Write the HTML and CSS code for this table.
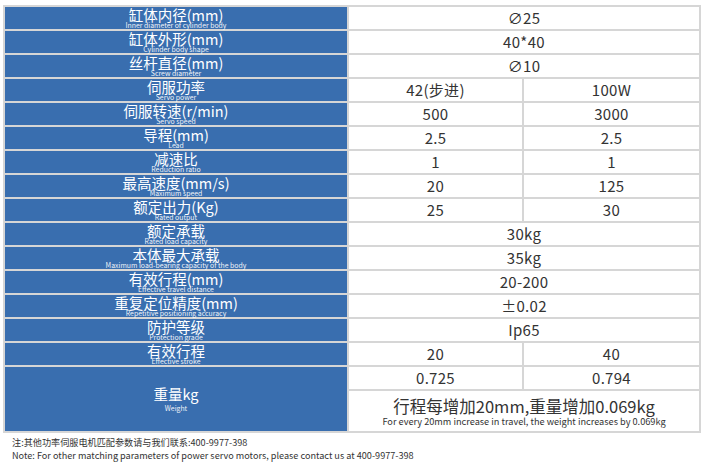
FILE: index.html
```html
<!DOCTYPE html>
<html lang="zh">
<head>
<meta charset="utf-8">
<link rel="stylesheet" href="styles.css">
</head>
<body>
<div class="page">
  <div class="spec">
    <div class="lbl"><span class="zh">缸体内径(mm)</span><span class="en">Inner diameter of cylinder body</span></div>
    <div class="val span2">∅25</div>

    <div class="lbl"><span class="zh">缸体外形(mm)</span><span class="en">Cylinder body shape</span></div>
    <div class="val span2">40*40</div>

    <div class="lbl"><span class="zh">丝杆直径(mm)</span><span class="en">Screw diameter</span></div>
    <div class="val span2">∅10</div>

    <div class="lbl"><span class="zh">伺服功率</span><span class="en">Servo power</span></div>
    <div class="val">42(步进)</div>
    <div class="val">100W</div>

    <div class="lbl"><span class="zh">伺服转速(r/min)</span><span class="en">Servo speed</span></div>
    <div class="val">500</div>
    <div class="val">3000</div>

    <div class="lbl"><span class="zh">导程(mm)</span><span class="en">Lead</span></div>
    <div class="val">2.5</div>
    <div class="val">2.5</div>

    <div class="lbl"><span class="zh">减速比</span><span class="en">Reduction ratio</span></div>
    <div class="val">1</div>
    <div class="val">1</div>

    <div class="lbl"><span class="zh">最高速度(mm/s)</span><span class="en">Maximum speed</span></div>
    <div class="val">20</div>
    <div class="val">125</div>

    <div class="lbl"><span class="zh">额定出力(Kg)</span><span class="en">Rated output</span></div>
    <div class="val">25</div>
    <div class="val">30</div>

    <div class="lbl"><span class="zh">额定承载</span><span class="en">Rated load capacity</span></div>
    <div class="val span2">30kg</div>

    <div class="lbl"><span class="zh">本体最大承载</span><span class="en">Maximum load-bearing capacity of the body</span></div>
    <div class="val span2">35kg</div>

    <div class="lbl"><span class="zh">有效行程(mm)</span><span class="en">Effective travel distance</span></div>
    <div class="val span2">20-200</div>

    <div class="lbl"><span class="zh">重复定位精度(mm)</span><span class="en">Repetitive positioning accuracy</span></div>
    <div class="val span2">±0.02</div>

    <div class="lbl"><span class="zh">防护等级</span><span class="en">Protection grade</span></div>
    <div class="val span2">Ip65</div>

    <div class="lbl"><span class="zh">有效行程</span><span class="en">Effective stroke</span></div>
    <div class="val">20</div>
    <div class="val">40</div>

    <div class="lbl tall"><span class="zh">重量kg</span><span class="en">Weight</span></div>
    <div class="val">0.725</div>
    <div class="val">0.794</div>
    <div class="val span2 note-cell"><span class="zh-big">行程每增加20mm,重量增加0.069kg</span><span class="en-sm">For every 20mm increase in travel, the weight increases by 0.069kg</span></div>
  </div>
  <p class="note">注:其他功率伺服电机匹配参数请与我们联系:400-9977-398</p>
  <p class="note">Note: For other matching parameters of power servo motors, please contact us at 400-9977-398</p>
</div>
</body>
</html>
```
FILE: styles.css
```css
* { box-sizing: border-box; }
html, body { margin: 0; padding: 0; background: #fff; }
body { font-family: "Noto Sans CJK SC", "Noto Sans", sans-serif; color: #333; }
.page { padding: 5px 0 0 3px; width: 715px; }
.spec {
  display: grid;
  width: 698px;
  grid-template-columns: 342px 173px 175px;
  grid-template-rows: repeat(16, 22px) 40px;
  gap: 2px;
  padding: 2px;
  background: #d6d6d6;
}
.lbl {
  background: #396eaf;
  color: #fff;
  display: flex;
  flex-direction: column;
  align-items: center;
  justify-content: flex-start;
  padding-top: 1px;
}
.lbl.tall { grid-row: span 2; justify-content: center; padding-top: 0; }
.zh { display: block; font-size: 14.5px; line-height: 14px; }
.en { display: block; font-size: 6.9px; line-height: 7px; opacity: 0.92; }
.tall .zh { line-height: 16px; margin-bottom: 2px; }
.tall .en { line-height: 9px; }
.val {
  background: #fff;
  display: flex;
  align-items: center;
  justify-content: center;
  font-size: 15px;
  line-height: 22px;
  letter-spacing: 0.3px;
  color: #333;
}
.span2 { grid-column: span 2; }
.note-cell { flex-direction: column; line-height: normal; letter-spacing: 0; padding-top: 1px; }
.zh-big { display: block; font-size: 16.5px; line-height: 19px; }
.en-sm { display: block; font-size: 9.2px; line-height: 11px; }
.note { margin: 0 0 0 9px; font-size: 9.15px; line-height: 13px; color: #333; }
.note:first-of-type { margin-top: 3px; }
```
